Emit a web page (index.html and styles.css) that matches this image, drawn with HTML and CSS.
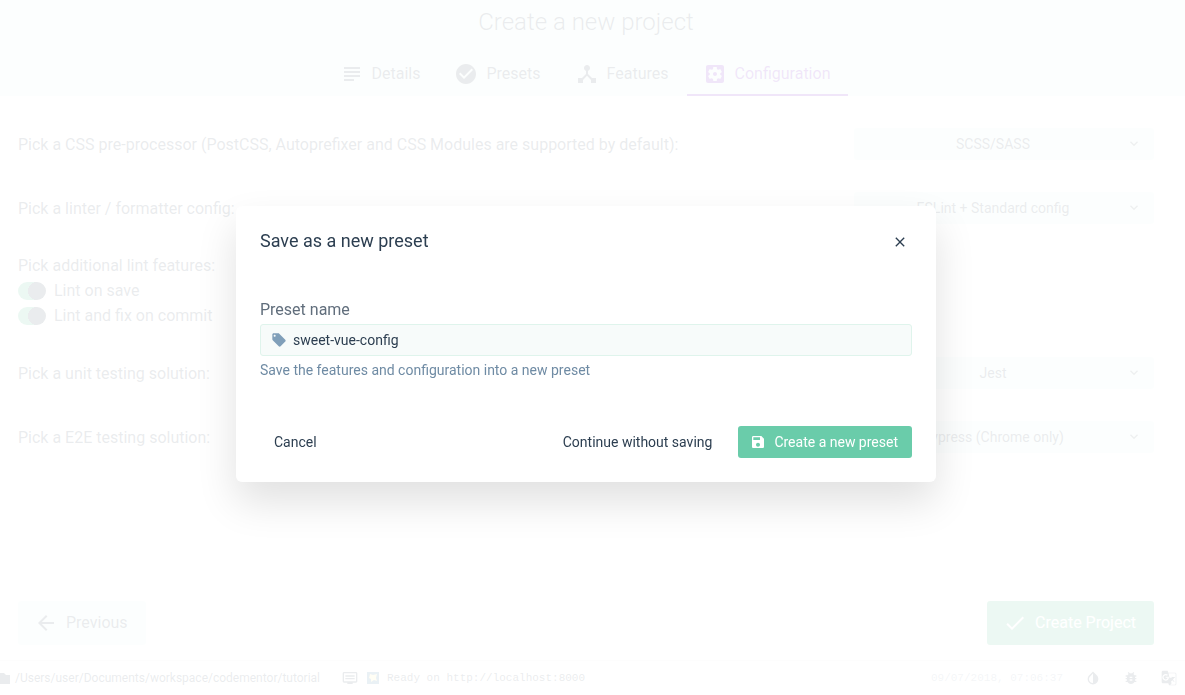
FILE: index.html
```html
<!DOCTYPE html>
<html lang="en">
<head>
<meta charset="utf-8">
<meta name="viewport" content="width=device-width, initial-scale=1">
<title>Create a new project</title>
<link rel="stylesheet" href="styles.css">
</head>
<body>
<div class="app">
  <header class="header">
    <h1 class="title">Create a new project</h1>
    <nav class="tabs">
      <button class="tab" type="button"><svg class="icon" viewBox="0 0 24 24"><path d="M4 15h16v-2H4v2zm0 4h10v-2H4v2zm0-8h16V9H4v2zm0-6v2h16V5H4z"/></svg>Details</button>
      <button class="tab" type="button"><svg class="icon" viewBox="0 0 24 24"><path d="M12 2C6.480 2 2 6.480 2 12s4.480 10 10 10 10-4.480 10-10S17.520 2 12 2zm-2 15l-5-5 1.410-1.410L10 14.170l7.590-7.590L19 8l-9 9z"/></svg>Presets</button>
      <button class="tab" type="button"><svg class="icon" viewBox="0 0 24 24"><path d="M17 16l-4-4V8.820C14.160 8.400 15 7.300 15 6c0-1.660-1.340-3-3-3S9 4.340 9 6c0 1.300.84 2.400 2 2.820V12l-4 4H3v5h5v-3.050l4-4.200 4 4.200V21h5v-5h-4z"/></svg>Features</button>
      <button class="tab tab-active" type="button"><svg class="icon" viewBox="0 0 24 24"><path d="M12 10c-1.100 0-2 .9-2 2s.9 2 2 2 2-.9 2-2-.9-2-2-2zm7-7H5c-1.110 0-2 .9-2 2v14c0 1.100.89 2 2 2h14c1.110 0 2-.9 2-2V5c0-1.100-.89-2-2-2zm-1.750 9c0 .23-.02.46-.05.68l1.480 1.160c.13.11.17.3.08.45l-1.400 2.420c-.09.15-.27.21-.43.15l-1.740-.7c-.36.28-.76.51-1.180.69l-.26 1.850c-.03.17-.18.3-.35.3h-2.800c-.17 0-.32-.13-.35-.29l-.26-1.850c-.43-.18-.82-.41-1.180-.69l-1.740.7c-.16.06-.34 0-.43-.15l-1.400-2.420c-.09-.15-.05-.34.08-.45l1.480-1.160c-.03-.23-.05-.46-.05-.69 0-.23.02-.46.05-.68l-1.480-1.160c-.13-.11-.17-.3-.08-.45l1.400-2.420c.09-.15.27-.21.43-.15l1.740.7c.36-.28.76-.51 1.180-.69l.26-1.850c.03-.17.18-.3.35-.3h2.800c.17 0 .32.13.35.29l.26 1.850c.43.18.82.41 1.180.69l1.740-.7c.16-.06.34 0 .43.15l1.400 2.420c.09.15.05.34-.08.45l-1.480 1.160c.03.23.05.46.05.69z"/></svg>Configuration</button>
    </nav>
  </header>

  <main class="content">
    <div class="row">
      <label class="row-label" for="css">Pick a CSS pre-processor (PostCSS, Autoprefixer and CSS Modules are supported by default):</label>
      <div class="select-box"><select class="select" id="css"><option>SCSS/SASS</option></select><svg class="chevron" viewBox="0 0 24 24"><path d="M7.410 7.840L12 12.420l4.590-4.580L18 9.250l-6 6-6-6z"/></svg></div>
    </div>
    <div class="row">
      <label class="row-label" for="linter">Pick a linter / formatter config:</label>
      <div class="select-box"><select class="select" id="linter"><option>ESLint + Standard config</option></select><svg class="chevron" viewBox="0 0 24 24"><path d="M7.410 7.840L12 12.420l4.590-4.580L18 9.250l-6 6-6-6z"/></svg></div>
    </div>
    <fieldset class="features">
      <legend class="legend">Pick additional lint features:</legend>
      <label class="toggle"><input class="switch" type="checkbox" checked>Lint on save</label>
      <label class="toggle"><input class="switch" type="checkbox" checked>Lint and fix on commit</label>
    </fieldset>
    <div class="row">
      <label class="row-label" for="unit">Pick a unit testing solution:</label>
      <div class="select-box"><select class="select" id="unit"><option>Jest</option></select><svg class="chevron" viewBox="0 0 24 24"><path d="M7.410 7.840L12 12.420l4.590-4.580L18 9.250l-6 6-6-6z"/></svg></div>
    </div>
    <div class="row">
      <label class="row-label" for="e2e">Pick a E2E testing solution:</label>
      <div class="select-box"><select class="select" id="e2e"><option>Cypress (Chrome only)</option></select><svg class="chevron" viewBox="0 0 24 24"><path d="M7.410 7.840L12 12.420l4.590-4.580L18 9.250l-6 6-6-6z"/></svg></div>
    </div>
  </main>

  <div class="actions">
    <button class="big-button" type="button"><svg class="icon" viewBox="0 0 24 24"><path d="M20 11H7.830l5.590-5.590L12 4l-8 8 8 8 1.410-1.410L7.830 13H20v-2z"/></svg>Previous</button>
    <button class="big-button big-primary" type="button"><svg class="icon" viewBox="0 0 24 24"><path d="M9 16.170L4.830 12l-1.420 1.410L9 19 21 7l-1.410-1.410z"/></svg>Create Project</button>
  </div>

  <footer class="status">
    <svg class="small-icon folder" viewBox="0 0 13 16"><path d="M0 3h4l2 2h4v9H0z"/></svg>
    <span class="path">/Users/user/Documents/workspace/codementor/tutorial</span>
    <svg class="small-icon log" viewBox="0 0 24 24"><path d="M21 3H3c-1.100 0-2 .9-2 2v12c0 1.100.9 2 2 2h5v2h8v-2h5c1.100 0 2-.9 2-2V5c0-1.100-.9-2-2-2zm0 14H3V5h18v12zm-2-9H5v2h14V8zm0 4H5v2h14v-2z"/></svg>
    <svg class="badge" viewBox="0 0 12 12"><path fill="#2f6f9a" d="M0 0h12v12H0z"/><path fill="#fff29a" d="M3 2l3 1 4-1-1 4 1 3-3-1-3 2V7L2 6z"/></svg>
    <span class="mono">Ready on http://localhost:8000</span>
    <time class="mono date">09/07/2018, 07:06:37</time>
    <button class="status-button" type="button" aria-label="Toggle dark mode"><svg class="tiny-icon" viewBox="0 0 24 24"><path d="M17.660 8L12 2.350 6.340 8C4.780 9.560 4 11.640 4 13.640s.78 4.110 2.340 5.670 3.610 2.350 5.660 2.350 4.100-.79 5.660-2.350S20 15.640 20 13.640 19.220 9.560 17.660 8zM6 14c.01-2 .62-3.270 1.760-4.400L12 5.270v14.400C8.700 19.670 6 17.300 6 14z"/></svg></button>
    <button class="status-button" type="button" aria-label="Report a bug"><svg class="tiny-icon" viewBox="0 0 24 24"><path d="M20 8h-2.810c-.45-.78-1.070-1.450-1.820-1.960L17 4.410 15.590 3l-2.170 2.170C12.960 5.060 12.490 5 12 5s-.96.06-1.410.17L8.410 3 7 4.410l1.620 1.630C7.880 6.550 7.260 7.220 6.810 8H4v2h2.090c-.05.33-.09.66-.09 1v1H4v2h2v1c0 .34.04.67.09 1H4v2h2.810c1.040 1.790 2.970 3 5.190 3s4.150-1.210 5.190-3H20v-2h-2.090c.05-.33.09-.66.09-1v-1h2v-2h-2v-1c0-.34-.04-.67-.09-1H20V8zm-6 8h-4v-2h4v2zm0-4h-4v-2h4v2z"/></svg></button>
    <button class="status-button" type="button" aria-label="Translate"><svg class="tiny-icon" viewBox="0 0 24 24"><path d="M21 4H11l-1-3H3c-1.100 0-2 .9-2 2v15c0 1.100.9 2 2 2h8l1 3h9c1.100 0 2-.9 2-2V6c0-1.100-.9-2-2-2zM7 16c-2.760 0-5-2.240-5-5s2.240-5 5-5c1.350 0 2.480.5 3.350 1.300L9.030 8.570c-.38-.36-1.040-.78-2.030-.78-1.740 0-3.150 1.440-3.150 3.210S5.260 14.210 7 14.210c2.010 0 2.840-1.440 2.920-2.410H7v-1.710h4.680c.07.31.12.61.12 1.020C11.800 13.970 9.890 16 7 16zm15 5c0 .55-.45 1-1 1h-7l2-2-1-2.500 2-2 2.500 2.500.8-.7-2.400-2.500c.9-1.100 1.500-2.200 1.700-3.200H21v-1h-4V10h-1v1.600h-3.300L11.300 5H21c.55 0 1 .45 1 1v15z"/></svg></button>
  </footer>
</div>

<div class="overlay">
  <section class="modal" role="dialog" aria-modal="true" aria-labelledby="modal-title">
    <div class="modal-head">
      <h2 class="modal-title" id="modal-title">Save as a new preset</h2>
      <button class="close" type="button" aria-label="Close"><svg class="close-icon" viewBox="0 0 24 24"><path d="M19 6.410L17.590 5 12 10.590 6.410 5 5 6.410 10.590 12 5 17.590 6.410 19 12 13.410 17.590 19 19 17.590 13.410 12z"/></svg></button>
    </div>
    <div class="modal-body">
      <label class="field-label" for="preset">Preset name</label>
      <div class="field">
        <svg class="tag" viewBox="0 0 24 24"><path d="M21.410 11.580l-9-9C12.050 2.220 11.550 2 11 2H4c-1.100 0-2 .9-2 2v7c0 .55.22 1.050.59 1.420l9 9c.36.36.86.58 1.410.58s1.050-.22 1.410-.59l7-7c.37-.36.59-.86.59-1.410s-.23-1.060-.59-1.420zM5.500 7C4.670 7 4 6.330 4 5.500S4.670 4 5.500 4 7 4.670 7 5.500 6.330 7 5.500 7z"/></svg>
        <input class="input" id="preset" type="text" value="sweet-vue-config">
      </div>
      <p class="hint">Save the features and configuration into a new preset</p>
    </div>
    <div class="modal-actions">
      <button class="button cancel" type="button">Cancel</button>
      <button class="button" type="button">Continue without saving</button>
      <button class="button primary" type="button"><svg class="save-icon" viewBox="0 0 24 24"><path d="M17 3H5c-1.110 0-2 .9-2 2v14c0 1.100.89 2 2 2h14c1.100 0 2-.9 2-2V7l-4-4zm-5 16c-1.660 0-3-1.340-3-3s1.340-3 3-3 3 1.340 3 3-1.340 3-3 3zm3-10H5V5h10v4z"/></svg>Create a new preset</button>
    </div>
  </section>
</div>
</body>
</html>
```

FILE: styles.css
```css
* { box-sizing: border-box; }

body {
  margin: 0;
  background: #fff;
  color: #2c3e50;
  font: 16px/24px Roboto, "Liberation Sans", sans-serif;
}

button, input, select { font: inherit; color: inherit; border: 0; margin: 0; }
button { background: none; padding: 0; cursor: pointer; }
svg { display: block; flex: none; fill: currentColor; }

.app { min-height: 100vh; display: flex; flex-direction: column; }

.header {
  display: flex;
  flex-direction: column;
  align-items: center;
  padding-right: 13px;
  background: #e1f5ee;
}
.title { margin: 0; font-size: 24px; line-height: 44px; font-weight: 300; }
.tabs { display: flex; }
.tab {
  display: flex;
  align-items: center;
  gap: 8px;
  height: 52px;
  padding: 10px 18px 0 16px;
  border-bottom: 2px solid transparent;
}
.tab-active { color: #6806c1; border-bottom-color: #6806c1; }
.icon { width: 24px; height: 24px; }

.content {
  flex: 1;
  display: flex;
  flex-direction: column;
  gap: 32px;
  padding: 32px 31px 32px 18px;
}
.row { display: flex; align-items: center; justify-content: space-between; }
.row-label { padding-top: 2px; }
.select-box { position: relative; width: 300px; }
.select {
  width: 100%;
  height: 32px;
  padding: 0 36px 0 14px;
  border-radius: 3px;
  background: #e1f5ee;
  font-size: 14px;
  text-align-last: center;
  appearance: none;
}
.chevron {
  position: absolute;
  top: 8px;
  right: 12px;
  width: 16px;
  height: 16px;
  opacity: .8;
  pointer-events: none;
}

.features { margin: -2px 0 -3px; padding: 0; border: 0; min-width: 0; }
.legend { padding: 0; line-height: 24px; }
.toggle { display: flex; align-items: center; gap: 8px; line-height: 25px; }
.switch {
  appearance: none;
  width: 28px;
  height: 18px;
  margin: 0;
  border-radius: 9px;
  background: radial-gradient(circle at 19px 9px, #2c3e50 9px, #42b983 9px);
}

.actions { display: flex; justify-content: space-between; padding: 0 31px 15px 18px; }
.big-button {
  display: flex;
  align-items: center;
  gap: 8px;
  height: 44px;
  padding: 0 18px 0 16px;
  border-radius: 3px;
  background: #e1f5ee;
}
.big-primary { background: #42b983; color: #fff; }

.status {
  display: flex;
  align-items: center;
  height: 35px;
  border-top: 1px solid #e4e8ea;
  overflow: hidden;
}
.small-icon { width: 16px; height: 16px; }
.folder { width: 13px; }
.path { margin-left: 2px; font-size: 12px; }
.log { margin-left: 22px; }
.badge { width: 12px; height: 12px; margin: 0 8px 0 9px; }
.mono { font: 11px/16px "Liberation Mono", monospace; }
.date { margin-left: auto; margin-right: 22px; color: #8fa0ae; }
.status-button { width: 38px; display: flex; justify-content: flex-start; }
.status-button:last-child { width: 24px; }
.tiny-icon { width: 16px; height: 16px; }

.overlay {
  position: fixed;
  inset: 0;
  display: flex;
  align-items: center;
  justify-content: center;
  padding: 0 13px 7px 0;
  background: rgba(255, 255, 255, .9);
}
.modal {
  width: 700px;
  max-width: 100%;
  padding: 24px;
  border-radius: 6px;
  background: #fff;
  box-shadow: 0 20px 40px rgba(0, 0, 0, .12);
}
.modal-head { display: flex; align-items: flex-start; justify-content: space-between; height: 24px; }
.modal-title { margin: 0; font-size: 18px; line-height: 22px; font-weight: 400; }
.close { width: 24px; height: 24px; display: grid; place-items: center; }
.close-icon { width: 16px; height: 16px; }
.modal-body { padding: 42px 0 46px; }
.field-label { display: block; color: #616e7c; line-height: 28px; }
.field {
  display: flex;
  align-items: center;
  gap: 6px;
  height: 32px;
  padding: 0 10px;
  border: 1px solid #dff4ec;
  border-radius: 3px;
  background: #f7fbfa;
}
.tag { width: 16px; height: 16px; color: #809fb9; }
.input {
  flex: 1;
  min-width: 0;
  padding: 0;
  background: none;
  font-size: 14px;
  line-height: 20px;
  outline: 0;
}
.hint { margin: 4px 0 0; color: #6f8ba4; font-size: 14px; line-height: 20px; }
.modal-actions { display: flex; gap: 12px; }
.button {
  display: flex;
  align-items: center;
  gap: 8px;
  height: 32px;
  padding: 0 14px;
  border-radius: 3px;
  font-size: 14px;
}
.cancel { margin-right: auto; }
.primary { padding-left: 12px; background: #6accaa; color: #fff; }
.save-icon { width: 16px; height: 16px; }
```
